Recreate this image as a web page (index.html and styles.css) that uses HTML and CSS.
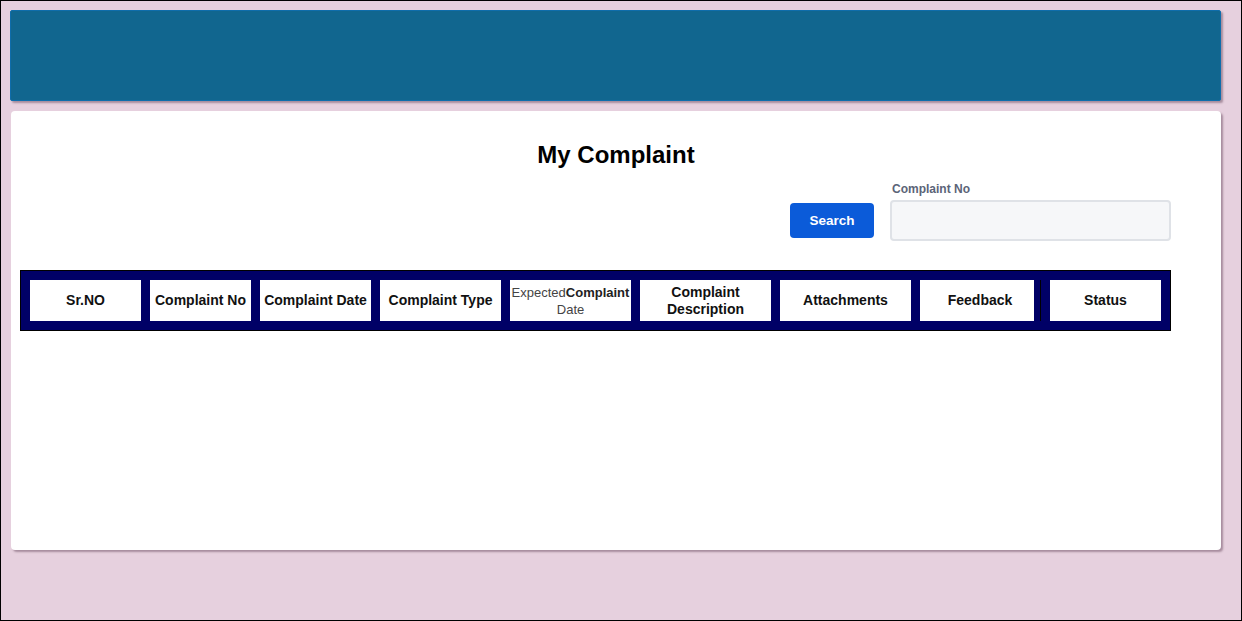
FILE: index.html
```html
<!DOCTYPE html>
<html lang="en">
<head>
<meta charset="utf-8">
<title>My Complaint</title>
<link rel="stylesheet" href="styles.css">
</head>
<body>
<div class="page">
  <header class="topbar"></header>
  <main class="card">
    <h1 class="title">My Complaint</h1>
    <div class="search-row">
      <button class="search-btn" type="button">Search</button>
      <div class="field">
        <label class="field-label" for="cno">Complaint No</label>
        <input class="field-input" id="cno" type="text">
      </div>
    </div>
    <div class="grid-head">
      <div class="cell w-sr">Sr.NO</div>
      <div class="cell w-no">Complaint No</div>
      <div class="cell w-date">Complaint Date</div>
      <div class="cell w-type">Complaint Type</div>
      <div class="cell w-exp exp"><span class="exp-text"><span class="light">Expected</span>Complaint <span class="light">Date</span></span></div>
      <div class="cell w-desc">Complaint Description</div>
      <div class="cell w-att">Attachments</div>
      <div class="cell w-fb">Feedback</div>
      <div class="status-group">
        <div class="cell w-st">Status</div>
      </div>
    </div>
  </main>
</div>
</body>
</html>
```

FILE: styles.css
```css
* { box-sizing: border-box; }
html, body { margin: 0; padding: 0; }
body {
  width: 1242px;
  height: 621px;
  border: 1px solid #000;
  background: #e6d0de;
  font-family: "Liberation Sans", Arial, sans-serif;
  overflow: hidden;
}
.page {
  padding: 9px 0 0 9px;
}
.topbar {
  width: 1211px;
  height: 91px;
  background: #11668f;
  border: 1px solid #0f6dab;
  border-radius: 2px;
  box-shadow: 2px 2px 2px rgba(90, 60, 80, 0.45);
}
.card {
  width: 1210px;
  height: 439px;
  margin: 10px 0 0 1px;
  background: #fff;
  border-radius: 4px;
  box-shadow: 2px 2px 2px rgba(90, 60, 80, 0.45);
  padding: 30px 0 0 9px;
}
.title {
  margin: 0;
  font-size: 24px;
  line-height: 28px;
  font-weight: bold;
  color: #000;
  text-align: center;
  padding-right: 9px;
}
.search-row {
  display: flex;
  justify-content: flex-end;
  align-items: flex-end;
  gap: 16px;
  margin-top: 13px;
  padding-right: 50px;
}
.search-btn {
  width: 84px;
  height: 35px;
  margin-bottom: 3px;
  background: #0b5bd9;
  color: #fff;
  border: none;
  border-radius: 4px;
  font-family: "Liberation Sans", Arial, sans-serif;
  font-size: 13.5px;
  font-weight: bold;
  padding: 0;
}
.field {
  display: flex;
  flex-direction: column;
}
.field-label {
  font-size: 12px;
  line-height: 15px;
  font-weight: bold;
  color: #5b6478;
  padding-left: 2px;
  margin-bottom: 3px;
}
.field-input {
  width: 281px;
  height: 41px;
  background: #f6f7f9;
  border: 2px solid #dfe2e7;
  border-radius: 4px;
}
.grid-head {
  display: flex;
  gap: 9px;
  width: 1151px;
  margin-top: 29px;
  padding: 9px;
  background: #000066;
  border: 1px solid #000;
}
.cell {
  height: 41px;
  background: #fff;
  display: flex;
  align-items: center;
  justify-content: center;
  text-align: center;
  font-size: 14px;
  line-height: 17px;
  font-weight: bold;
  color: #111;
}
.exp {
  font-size: 13px;
  line-height: 17px;
  color: #222;
}
.exp-text {
  display: block;
  width: 100%;
}
.light {
  font-weight: normal;
  color: #444;
}
.status-group {
  margin-left: -3px;
  border-left: 1px solid #000;
  padding-left: 9px;
}
.w-sr { width: 111px; }
.w-no { width: 101px; }
.w-date { width: 111px; }
.w-type { width: 121px; }
.w-exp { width: 121px; }
.w-desc { width: 131px; }
.w-att { width: 131px; }
.w-fb { width: 114px; padding-left: 6px; }
.w-st { width: 111px; }
```
